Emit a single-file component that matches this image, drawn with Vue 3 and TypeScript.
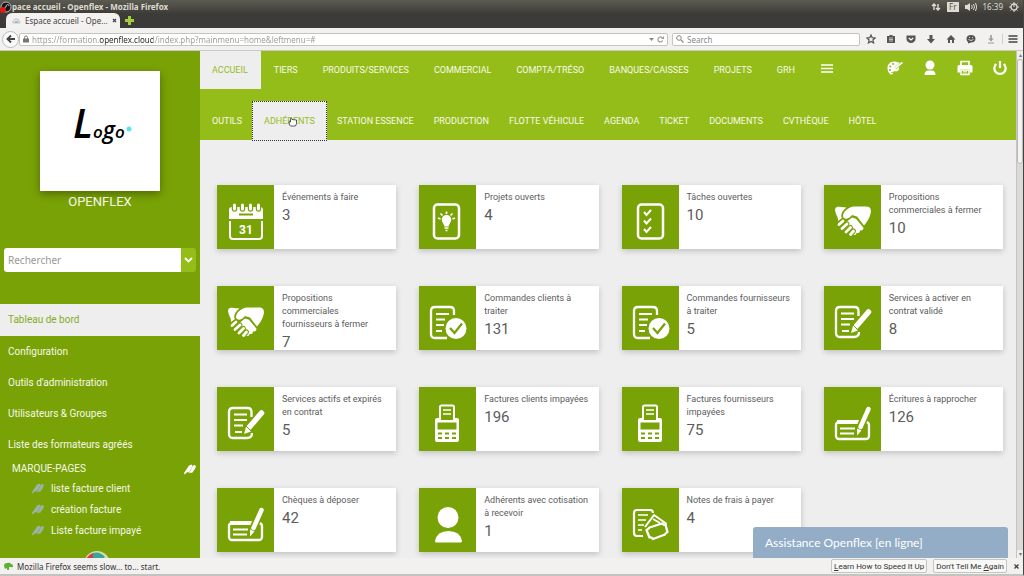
<script setup lang="ts">
import { ref } from 'vue'

type IconName = 'calendar' | 'idea' | 'tasks' | 'handshake' | 'order' | 'contract' | 'invoice' | 'cheque' | 'member' | 'expense'

interface Card {
  title: string
  count: number
  icon: IconName
}

const address = ref('https://formation.openflex.cloud/index.php?mainmenu=home&leftmenu=#')
const webQuery = ref('')
const query = ref('')

const mainMenu: string[] = ['ACCUEIL', 'TIERS', 'PRODUITS/SERVICES', 'COMMERCIAL', 'COMPTA/TRÉSO', 'BANQUES/CAISSES', 'PROJETS', 'GRH']
const subMenu: string[] = ['OUTILS', 'ADHÉRENTS', 'STATION ESSENCE', 'PRODUCTION', 'FLOTTE VÉHICULE', 'AGENDA', 'TICKET', 'DOCUMENTS', 'CVTHÈQUE', 'HÔTEL']
const sideMenu: string[] = ['Tableau de bord', 'Configuration', "Outils d'administration", 'Utilisateurs & Groupes', 'Liste des formateurs agréés']
const bookmarks: string[] = ['liste facture client', 'création facture', 'Liste facture impayé']

const cards: Card[] = [
  { title: 'Événements à faire', count: 3, icon: 'calendar' },
  { title: 'Projets ouverts', count: 4, icon: 'idea' },
  { title: 'Tâches ouvertes', count: 10, icon: 'tasks' },
  { title: 'Propositions commerciales à fermer', count: 10, icon: 'handshake' },
  { title: 'Propositions commerciales fournisseurs à fermer', count: 7, icon: 'handshake' },
  { title: 'Commandes clients à traiter', count: 131, icon: 'order' },
  { title: 'Commandes fournisseurs à traiter', count: 5, icon: 'order' },
  { title: 'Services à activer en contrat validé', count: 8, icon: 'contract' },
  { title: 'Services actifs et expirés en contrat', count: 5, icon: 'contract' },
  { title: 'Factures clients impayées', count: 196, icon: 'invoice' },
  { title: 'Factures fournisseurs impayées', count: 75, icon: 'invoice' },
  { title: 'Écritures à rapprocher', count: 126, icon: 'cheque' },
  { title: 'Chèques à déposer', count: 42, icon: 'cheque' },
  { title: 'Adhérents avec cotisation à recevoir', count: 1, icon: 'member' },
  { title: 'Notes de frais à payer', count: 4, icon: 'expense' },
]
</script>

<template>
  <div class="window">
    <header class="titlebar">
      <div class="sysbar">
        <svg class="obs" viewBox="0 0 12 12"><circle cx="6" cy="6" r="5" fill="#161616" stroke="#bbb" /><path d="M6 6c0-3 3-3 3-1M6 6c-3 1-2 3 0 3" stroke="#ccc" fill="none" /><circle cx="3" cy="9" r="3" fill="#e01818" /></svg>
        <span class="wintitle">pace accueil - Openflex - Mozilla Firefox</span>
        <div class="tray">
          <svg width="10" height="10" viewBox="0 0 10 10"><path d="M3 8V2M1 4l2-2 2 2M7 2v6M5 6l2 2 2-2" fill="none" stroke="#dfdbd2" stroke-width="1.4" /></svg>
          <span class="lang">Fr</span>
          <svg width="12" height="10" viewBox="0 0 12 10"><path d="M0 3h2l3-2v8l-3-2H0z" fill="#dfdbd2" /><path d="M6.500 3q1.500 2 0 4M8.500 2q2 3 0 6M10.500 1q2.500 4 0 8" fill="none" stroke="#dfdbd2" /></svg>
          <span>16:39</span>
          <svg width="10" height="10" viewBox="0 0 10 10"><circle cx="5" cy="5" r="3" fill="none" stroke="#dfdbd2" stroke-width="1.300" /><path d="M5 0v5M5 8v2M0 5h2M8 5h2M1.500 1.500l1 1M8.500 1.500l-1 1M1.500 8.500l1-1M8.500 8.500l-1-1" stroke="#dfdbd2" /></svg>
        </div>
      </div>
      <div class="tabs">
        <div class="tab">
          <svg width="9" height="8" viewBox="0 0 9 8"><path d="M1 6q-1-2 1-3 1-2 3-1 2 0 2 2 1 0 1 2z" fill="#dde5ea" stroke="#aab6bd" stroke-width=".7" /><path d="M3 5h3" stroke="#5aa" /></svg>
          <span>Espace accueil - Ope...</span>
          <button class="plain" aria-label="Fermer l'onglet"><svg width="5" height="5" viewBox="0 0 5 5"><path d="M1 1l3 3M4 1L1 4" stroke="#444" stroke-width="1.300" /></svg></button>
        </div>
        <button class="plain" aria-label="Nouvel onglet"><svg width="9" height="9" viewBox="0 0 9 9"><path d="M3 0h3v3h3v3H6v3H3V6H0V3h3z" fill="#a4cf3c" /></svg></button>
      </div>
    </header>

    <nav class="toolbar" aria-label="Navigateur">
      <button class="back" aria-label="Retour"><svg width="10" height="10" viewBox="0 0 10 10"><path d="M9 5H2M5 1.500L1.500 5 5 8.500" fill="none" stroke="#444" stroke-width="1.900" /></svg></button>
      <div class="field urlfield">
        <svg width="6" height="8" viewBox="0 0 6 8"><path d="M1.500 4V2.500a1.500 1.500 0 0 1 3 0V4" fill="none" stroke="#777" /><rect y="3.500" width="6" height="4" rx=".5" fill="#777" /></svg>
        <input v-model="address" class="url" type="text" aria-label="Adresse">
        <svg width="5" height="3" viewBox="0 0 5 3"><path d="M0 0h5L2.500 3z" fill="#888" /></svg>
        <svg width="7" height="7" viewBox="0 0 7 7"><path d="M5.700 4.600A2.500 2.500 0 1 1 5 1.500" fill="none" stroke="#999" stroke-width="1.200" /><path d="M4 3h3V0z" fill="#999" /></svg>
      </div>
      <div class="field searchfield">
        <svg width="8" height="8" viewBox="0 0 8 8"><circle cx="3" cy="3" r="2.300" fill="none" stroke="#888" /><path d="M5 5l2.500 2.500" stroke="#888" stroke-width="1.300" /></svg>
        <input v-model="webQuery" type="text" placeholder="Search" aria-label="Search">
      </div>
      <div class="tools">
        <button class="plain" aria-label="Marquer"><svg viewBox="0 0 10 10"><path d="M5 1l1.200 2.700 2.900.3-2.200 2 .7 2.900L5 7.400 2.400 8.900 3.100 6 .9 4l2.900-.3z" fill="none" stroke="#555" stroke-width="1.200" /></svg></button>
        <button class="plain" aria-label="Marque-pages"><svg viewBox="0 0 10 10"><path d="M1 2h2q0-1 2-1t2 1h2v7H1z" fill="#555" /><path d="M3 4h4M3 5.500h4M3 7h4" stroke="#eee" stroke-width=".7" /></svg></button>
        <button class="plain" aria-label="Pocket"><svg viewBox="0 0 10 10"><path d="M.500 1.500h9V5a4.500 4 0 0 1-9 0z" fill="#555" /><path d="M2.800 4L5 6l2.200-2" fill="none" stroke="#fff" stroke-width="1.200" /></svg></button>
        <button class="plain" aria-label="Téléchargements"><svg viewBox="0 0 10 10"><path d="M3.500 1h3v4H9L5 9.500 1 5h2.500z" fill="#555" /></svg></button>
        <button class="plain" aria-label="Accueil du navigateur"><svg viewBox="0 0 10 10"><path d="M5 1l4.500 4.500h-1.500V9H6V6H4v3H2V5.500H.500z" fill="#555" /></svg></button>
        <button class="plain" aria-label="Discussion"><svg viewBox="0 0 10 10"><path d="M5 1c3 0 4.500 1.500 4.500 3.800S8 8.500 5 8.500L2 9.500V8C1 7.500.500 6 .500 4.800.500 2.500 2 1 5 1z" fill="#555" /><path d="M3 3.500h1M6 3.500h1M2.500 5.500q2.500 2 5 0" stroke="#eee" stroke-width=".8" fill="none" /></svg></button>
        <button class="plain" aria-label="Enregistrer"><svg viewBox="0 0 10 10"><path d="M4.200 1h1.600v3.500h2L5 7.500l-2.800-3h2zM2 8.500h6v1H2z" fill="#999" /></svg></button>
        <button class="plain menu" aria-label="Menu"><svg viewBox="0 0 10 10"><path d="M.500 2h9M.500 5h9M.500 8h9" stroke="#444" stroke-width="1.700" /></svg></button>
      </div>
    </nav>

    <div class="page">
      <aside class="sidebar">
        <div class="brand">
          <svg class="logo" viewBox="0 0 120 120" role="img" aria-label="Logo">
            <text x="33" y="67" class="script"><tspan font-size="40">L</tspan><tspan font-size="17">o</tspan><tspan font-size="23">g</tspan><tspan font-size="17">o</tspan></text>
            <circle cx="89" cy="58" r="2.500" fill="#5fe3e8" />
          </svg>
          <div class="company">OPENFLEX</div>
        </div>
        <form class="search" @submit.prevent>
          <input v-model="query" type="text" placeholder="Rechercher" aria-label="Rechercher">
          <button type="submit" aria-label="Options de recherche"><svg width="9" height="6" viewBox="0 0 9 6"><path d="M1 1l3.500 3.500L8 1" fill="none" stroke="#fff" stroke-width="1.800" /></svg></button>
        </form>
        <nav class="sidemenu" aria-label="Menu latéral">
          <a v-for="(item, i) in sideMenu" :key="item" href="#" :class="{ active: i === 0 }">{{ item }}</a>
        </nav>
        <section class="marks">
          <h2>MARQUE-PAGES
            <svg width="12" height="11" viewBox="0 0 12 11"><path d="M5 1.500l2.500-1L8.500 2 5 8.500 3.500 8 .500 10.500 0 9zM9 1.500l1.500-.5 1.500 1-1 3-3 4-1-.5-2 1z" fill="#fff" /></svg>
          </h2>
          <a v-for="b in bookmarks" :key="b" href="#">
            <svg width="12" height="11" viewBox="0 0 12 11"><path d="M5 1.500l2.500-1L8.500 2 5 8.500 3.500 8 .500 10.500 0 9zM9 1.500l1.500-.5 1.500 1-1 3-3 4-1-.5-2 1z" fill="#9bb3a6" /></svg>{{ b }}
          </a>
        </section>
        <svg class="badge" viewBox="0 0 26 26"><circle cx="13" cy="13" r="13" fill="#d9dcae" /><path d="M9 13V2q7-2 12 4l-8 7z" fill="#3aa39b" /><path d="M9 2v9L2 8q2-4 7-6z" fill="#d83a4c" /></svg>
      </aside>

      <div class="content">
        <header class="topnav">
          <div class="mainrow">
            <nav class="links primary" aria-label="Menu principal">
              <a v-for="(m, i) in mainMenu" :key="m" href="#" :class="{ active: i === 0 }">{{ m }}</a>
              <button class="plain burger" aria-label="Plus"><svg width="12" height="9" viewBox="0 0 12 9"><path d="M0 1h12M0 4.500h12M0 8h12" stroke="#fff" stroke-width="1.300" /></svg></button>
            </nav>
            <div class="actions">
              <button class="plain" aria-label="Thème"><svg viewBox="0 0 16 16"><path d="M8 1.500C3.500 1 .500 4 .500 8c0 3 1.500 6 4 6.500 2 .2 1.300-2 2-3 1-1 3.500 1 5-1.500.8-1.500.8-2 .5-3L9 9 7.500 7.500 11 3Q10 1.800 8 1.500z" fill="#fff" /><path d="M8 8l7.500-5.500M9 5l3-2.500" stroke="#fff" stroke-width="1.600" /><circle cx="6" cy="4" r="1.100" fill="#95bd1a" /><circle cx="3.300" cy="6.500" r="1.100" fill="#95bd1a" /><circle cx="3" cy="10" r="1.100" fill="#95bd1a" /><circle cx="5" cy="12.500" r=".8" fill="#95bd1a" /></svg></button>
              <button class="plain" aria-label="Utilisateur"><svg viewBox="0 0 16 16"><circle cx="8" cy="5" r="4.500" fill="#fff" /><path d="M2.500 15q0-4.500 4-4.500h3q4 0 4 4.500z" fill="#fff" /></svg></button>
              <button class="plain" aria-label="Imprimer"><svg viewBox="0 0 16 16"><path d="M4 5.500V1.500h8v4" fill="none" stroke="#fff" stroke-width="1.600" /><path d="M.500 6.500q0-1.500 1.500-1.500h12q1.500 0 1.500 1.500v6h-3V9H3.500v3.500h-3z" fill="#fff" /><path d="M4 10v4.500h8V10z" fill="none" stroke="#fff" stroke-width="1.400" /><path d="M6 11.500h4M6 13h4" stroke="#fff" stroke-width=".7" /></svg></button>
              <button class="plain" aria-label="Déconnexion"><svg viewBox="0 0 16 16"><path d="M4.200 4a5.700 5.700 0 1 0 7.600 0M8 1v7" fill="none" stroke="#fff" stroke-width="2.200" /></svg></button>
            </div>
          </div>
          <nav class="links subrow" aria-label="Modules">
            <a v-for="(m, i) in subMenu" :key="m" href="#" :class="{ hovered: i === 1 }">{{ m }}<svg v-if="i === 1" class="cursor" viewBox="0 0 9 10"><path d="M1 4.500L1.500 8 2.500 9h5l1-2.500V3L4 2.500 3.500 1.200 2.500 1.500V5z" fill="#fff" stroke="#333" stroke-width=".8" /></svg></a>
          </nav>
        </header>

        <main class="cards">
          <article v-for="(card, n) in cards" :key="n" class="card">
            <svg class="icon" viewBox="0 0 57 64" fill="none" stroke="#fff">
              <template v-if="card.icon === 'calendar'">
                <path d="M12 34V25q0-3 3-3h28q3 0 3 3v9z" fill="#fff" stroke="none" />
                <path d="M17.500 20v4M25.500 20v4M33.500 20v4M41.500 20v4" stroke="#79a206" stroke-width="5.500" stroke-linecap="round" />
                <path d="M17.500 20v4M25.500 20v4M33.500 20v4M41.500 20v4" stroke-width="3" stroke-linecap="round" />
                <path d="M22 29.500h14" stroke="#79a206" stroke-width="2" />
                <path d="M13 36v15q0 3 3 3h26q3 0 3-3V36" stroke-width="2" />
                <text x="29" y="49" class="day">31</text>
              </template>
              <template v-else-if="card.icon === 'idea'">
                <rect x="15" y="19.500" width="25" height="34" rx="3.500" stroke-width="2.500" />
                <path d="M24 38a4.800 4.800 0 1 1 7 0l-1.500 3.500h-4z" fill="#fff" stroke="none" />
                <path d="M25.500 43h4M26.500 45.500h2M27.500 26.500v2.500M21.500 28.500l2 2M33.500 28.500l-2 2M19 33l2.500 1M36 33l-2.500 1" stroke-width="1.700" />
              </template>
              <template v-else-if="card.icon === 'tasks'">
                <rect x="16" y="19.500" width="25" height="34" rx="3.500" stroke-width="2.500" />
                <path d="M22 27l2.500 3 4.500-5M22 35.500l2.500 3 4.500-5M22 44l2.500 3 4.500-5" stroke-width="2" />
              </template>
              <template v-else-if="card.icon === 'handshake'">
                <path d="M11.500 27C10 22 13 21 17 22l5.500.5C19 25 17 28 17.200 31.500L18 33l-4 3c.5-4-2-5.500-2.500-9z" fill="#fff" stroke="none" />
                <path d="M19 31.500c0-5.500 6-9.500 11-10h12c5 0 5.500 3.500 4.500 7.500-1 4-3.500 8-6.500 11.500L33 31.500l-5-1.500c-3 4-8 5-9 1.500z" fill="#fff" stroke="none" />
                <path d="M21 38l7-5.500 4 1.200 7.500 9c0 2.500-2 3.300-3.500 2.500 0 2.500-2 3.500-3.500 2.500 0 2-1.500 2.500-3 2z" fill="#fff" stroke="none" />
                <path d="M15 39.500l4-3.500M18 43.500l5-4.500M22 47l4.500-4.500M26.500 49.500l3-3.500" stroke="#79a206" stroke-width="5" stroke-linecap="round" />
                <path d="M15 39.500l4-3.500M18 43.500l5-4.500M22 47l4.500-4.500M26.500 49.500l3-3.500" stroke-width="2.800" stroke-linecap="round" />
              </template>
              <template v-else-if="card.icon === 'order'">
                <path d="M35 29v-4q0-4-4-4H16q-4 0-4 4v23q0 4 4 4h12" stroke-width="2.300" />
                <path d="M17 28h13M17 33.500h9M17 39h8M17 45h6" stroke-width="2" />
                <circle cx="37" cy="42.500" r="10.500" fill="#fff" stroke="none" />
                <path d="M31 42l4.500 5 7.500-9.500" stroke="#79a206" stroke-width="2.300" />
              </template>
              <template v-else-if="card.icon === 'contract'">
                <path d="M34.500 30v-5q0-4-4-4H16q-4 0-4 4v22q0 4 4 4h14q5 0 5-5" stroke-width="2.300" />
                <path d="M17 27.500h13M17 33h13M17 38.500h9M18 45h7" stroke-width="2" />
                <path d="M45 26L32 40" stroke="#79a206" stroke-width="8" />
                <path d="M44.500 26L32 40.500" stroke-width="5.500" stroke-linecap="round" />
                <path d="M29 40l5 4.500-7 2.500z" fill="#fff" stroke="none" />
                <path d="M29 39l5 5" stroke="#79a206" />
              </template>
              <template v-else-if="card.icon === 'invoice'">
                <path d="M21 33V20q0-1.500 1.500-1.500h11q1.500 0 1.500 1.500v13" stroke-width="2" />
                <path d="M24 23h8M24 27h8" stroke-width="1.700" />
                <path d="M16 33q0-2 2-2h2v2h16v-2h2q2 0 2 2v20q0 2-2 2H18q-2 0-2-2z" fill="#fff" stroke="none" />
                <path d="M18.500 35.500h19v7h-19z" fill="#79a206" stroke="none" />
                <path d="M19 46.500h4M26 46.500h4M33 46.500h4M19 51h4M26 51h4M33 51h4" stroke="#79a206" stroke-width="2" />
              </template>
              <template v-else-if="card.icon === 'cheque'">
                <rect x="12" y="35" width="33" height="17" rx="3" stroke-width="2.300" />
                <path d="M13 35h28" stroke-width="4" />
                <path d="M16 41.500h15M16 46.500h14" stroke-width="2" />
                <path d="M44 22L34 46" stroke="#79a206" stroke-width="8" />
                <path d="M44.500 22L36.500 40" stroke-width="4.500" stroke-linecap="round" />
                <path d="M33 41.500l4.500 2-4.500 5z" fill="#fff" stroke="none" />
              </template>
              <template v-else-if="card.icon === 'member'">
                <circle cx="29" cy="29.500" r="10.500" fill="#fff" stroke="none" />
                <path d="M16 53q2-10 13.500-10T43 53q0 1.500-1.500 1.500h-24Q16 54.500 16 53z" fill="#fff" stroke="none" />
              </template>
              <template v-else>
                <path d="M31 25q0-3-3-3H15q-3 0-3 3v20q0 3 3 3h6" stroke-width="2.200" />
                <path d="M16 27h10M16 32h8M16 37h6M16 42h4" stroke-width="1.700" />
                <path d="M23 39l9-12 12 8.500-1 3" stroke-width="2" stroke-linejoin="round" />
                <path d="M31 31l7 4" stroke-width="1.500" />
                <path d="M24.500 42q2-1 3-2.500L40 35.500q1.500 1.500 3.500 1.500l2 7q-2 1-2.500 2.500L31 51q-1.500-2-3.500-1.500z" fill="#79a206" stroke-width="2.300" stroke-linejoin="round" />
              </template>
            </svg>
            <div class="info">
              <h3>{{ card.title }}</h3>
              <p>{{ card.count }}</p>
            </div>
          </article>
        </main>
      </div>

      <div class="scrollbar"><span class="arrow">▴</span><span class="thumb"></span><span class="arrow">▾</span></div>
      <button class="assist">Assistance Openflex [en ligne]</button>
    </div>

    <footer class="notice">
      <svg width="9" height="8" viewBox="0 0 9 8"><path d="M0 4q0-3 3-3 3-1 4 1 2 0 2 2t-2 1H5v3H3V6L1 7z" fill="#5db233" /></svg>
      <span class="message">Mozilla Firefox seems slow... to... start.</span>
      <button class="choice"><u>L</u>earn How to Speed It Up</button>
      <button class="choice">Don't Tell Me <u>A</u>gain</button>
      <button class="plain close" aria-label="Fermer"><svg width="5" height="5" viewBox="0 0 5 5"><path d="M.500.500l4 4M4.500.500l-4 4" stroke="#444" stroke-width="1.300" /></svg></button>
    </footer>
  </div>
</template>

<style>
html, body { margin: 0; }
body { overflow: hidden; }
</style>

<style scoped>
* { box-sizing: border-box; }
.window { display: flex; flex-direction: column; height: 100vh; font-family: Roboto, "Liberation Sans", sans-serif; background: #eee; border-right: 1px solid #44433e; border-bottom: 2px solid #c4c3c0; }
svg { display: block; flex: none; }
a { text-decoration: none; color: inherit; }
button, input { font: inherit; color: inherit; margin: 0; padding: 0; border: 0; min-width: 0; }
input { outline: none; background: none; }
button { cursor: pointer; }
.plain { background: none; display: flex; align-items: center; }

.titlebar { flex: none; background: linear-gradient(#5c5b52, #3c3b37 50%); color: #dfdbd2; font-family: "Noto Sans", sans-serif; font-size: 8px; }
.sysbar { height: 13px; display: flex; align-items: center; }
.obs { width: 12px; height: 12px; }
.wintitle { flex: 1; font-weight: 700; }
.tray { display: flex; align-items: center; gap: 6px; padding-right: 4px; }
.lang { background: #dfdbd2; color: #55544f; line-height: 10px; padding: 0 2px; }
.tabs { height: 15px; display: flex; align-items: center; gap: 5px; padding-left: 6px; }
.tab { display: flex; align-items: center; gap: 4px; width: 114px; height: 15px; padding: 0 6px; background: #f3f2f1; border-radius: 6px 6px 0 0; color: #444; white-space: nowrap; }
.tab span { flex: 1; }

.toolbar { flex: none; display: flex; align-items: center; gap: 4px; height: 23px; padding: 0 5px 0 2px; background: #f2f1f0; border-bottom: 1px solid #c9c8c5; font-family: "Noto Sans", sans-serif; font-size: 8px; color: #888; }
.back { width: 17px; height: 17px; border-radius: 50%; border: 1px solid #bbb; background: #fbfbfb; display: flex; align-items: center; justify-content: center; flex: none; }
.field { display: flex; align-items: center; gap: 3px; height: 13px; background: #fff; border: 1px solid #c6c4c1; border-radius: 2px; padding: 0 3px; }
.field input { flex: 1; height: 11px; line-height: 11px; }
.urlfield { flex: 1; margin-left: -4px; }
.searchfield { width: 188px; }
.url { color: transparent; background: linear-gradient(90deg, #999 67px, #222 67px, #222 121px, #999 121px); -webkit-background-clip: text; background-clip: text; }
.tools { display: flex; align-items: center; gap: 10px; padding-left: 2px; }
.tools svg { width: 10px; height: 10px; }
.menu { border-left: 1px solid #ccc; padding-left: 5px; margin-left: -4px; }

.page { position: relative; flex: 1; min-height: 0; display: flex; overflow: hidden; }
.sidebar { width: 200px; flex: none; background: #79a206; color: #f5f8e8; font-size: 10px; overflow: hidden; }
.brand { padding-top: 20px; text-align: center; }
.logo { width: 120px; height: 120px; margin: 0 auto; background: #fff; box-shadow: 0 3px 8px rgba(0, 0, 0, .35); }
.script { font-family: "Open Sans", "Noto Sans", cursive; font-style: italic; font-weight: 600; fill: #000; }
.company { font-size: 13px; line-height: 22px; }
.search { display: flex; height: 24px; margin: 35px 4px 32px; border-radius: 3px; overflow: hidden; }
.search input { flex: 1; background: #fff; color: #555; padding: 0 4px; font-family: "Noto Sans", sans-serif; }
.search input::placeholder { color: #999; opacity: 1; }
.field input::placeholder { color: #888; opacity: 1; }
.search button { width: 15px; background: #95bd1a; display: flex; align-items: center; justify-content: center; }
.sidemenu a { display: block; padding-left: 8px; line-height: 31px; }
.sidemenu .active { background: #eee; color: #84ad1a; line-height: 32px; }
.marks h2 { display: flex; justify-content: space-between; align-items: center; margin: 0; padding: 0 4px 0 12px; font-size: 10px; font-weight: 400; line-height: 18px; }
.marks a { display: flex; align-items: center; gap: 7px; padding-left: 32px; line-height: 21px; }
.badge { width: 26px; height: 26px; margin: 10px auto 0 84px; }

.content { flex: 1; min-width: 0; overflow: hidden; background: #eee; }
.topnav { background: #95bd1a; color: #f7fae8; font-size: 9px; }
.mainrow { display: flex; justify-content: space-between; height: 38px; }
.links { display: flex; }
.primary { gap: 1px; }
.links a { padding: 0 12px; line-height: 38px; white-space: nowrap; }
.links .active { background: #eee; color: #95bd1a; padding: 0 13px 0 12px; }
.burger { padding: 0 13px; height: 34px; }
.actions { display: flex; gap: 19px; padding-right: 8px; height: 34px; }
.actions svg { width: 16px; height: 16px; }
.subrow { height: 51px; padding: 12px 0 0 2px; }
.subrow a { position: relative; padding: 0 10px; line-height: 41px; height: 40px; }
.subrow .hovered { background: #eee; color: #95bd1a; outline: 1px dotted #333; outline-offset: -1px; padding: 0 12px; }
.cursor { position: absolute; left: 50%; top: 50%; width: 9px; height: 10px; margin: -4px 0 0 -2px; }

.cards { display: grid; grid-template-columns: repeat(4, 1fr); gap: 37px 23px; padding: 45px 13px 20px 17px; }
.card { display: flex; height: 64px; background: #fff; box-shadow: 0 2px 6px rgba(0, 0, 0, .2); overflow: hidden; }
.icon { width: 57px; height: 64px; background: #79a206; }
.day { font: 700 12px Roboto, sans-serif; fill: #fff; stroke: none; text-anchor: middle; }
.info { padding: 6px 8px 0 8px; color: #5c5c5c; min-width: 0; }
.info h3 { margin: 0; font-size: 9px; line-height: 13px; font-weight: 400; }
.info p { margin: 0; font-size: 15px; line-height: 22px; }

.scrollbar { width: 7px; flex: none; display: flex; flex-direction: column; background: #dcdad7; border-left: 1px solid #c5c3c0; font-size: 6px; line-height: 8px; color: #777; text-align: center; }
.thumb { height: 105px; background: #f4f3f2; border: 1px solid #bbb; border-radius: 3px; margin-bottom: auto; }
.arrow { background: #eee; height: 8px; }
.assist { position: absolute; right: 15px; bottom: 0; width: 255px; height: 31px; padding: 0 0 0 12px; border-radius: 3px 3px 0 0; background: #93adc6; color: #fff; font-family: Lato, sans-serif; font-size: 12px; text-align: left; }

.notice { flex: none; display: flex; align-items: center; gap: 4px; height: 16px; padding: 0 4px; background: #f2f1f0; color: #333; font-family: "Noto Sans", sans-serif; font-size: 8px; }
.message { flex: 1; }
.choice { height: 14px; padding: 0 2px; background: #f7f7f6; border: 1px solid #c6c4c1; border-radius: 2px; white-space: nowrap; font-family: Roboto, sans-serif; }
.choice + .choice { margin-left: 2px; }
.close { padding-left: 3px; }
</style>
